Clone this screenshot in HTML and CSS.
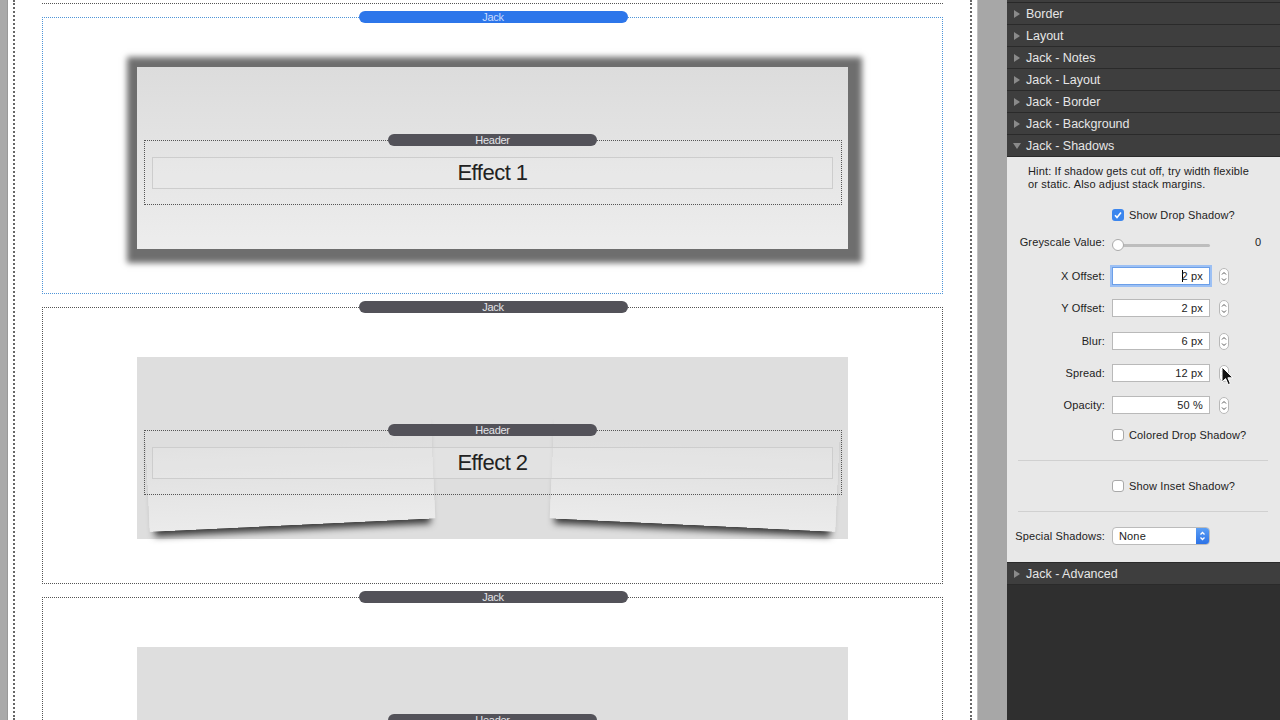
FILE: index.html
```html
<!DOCTYPE html>
<html>
  <head>
    <meta charset="UTF-8">
    <title>Jack - Shadows</title>
    <link rel="stylesheet" href="styles.css">
  </head>
  <body>
    <div class="app">
      <div class="edge"></div>

      <div class="canvas">
        <div class="page">
          <div class="stub"></div>

          <div class="stack selected">
            <span class="pill blue">Jack</span>
            <div class="sheet raised">
              <div class="header-box">
                <span class="pill small">Header</span>
                <div class="title">Effect 1</div>
              </div>
            </div>
          </div>

          <div class="stack">
            <span class="pill">Jack</span>
            <div class="sheet flat">
              <div class="curl left"></div>
              <div class="curl right"></div>
              <div class="header-box">
                <span class="pill small">Header</span>
                <div class="title">Effect 2</div>
              </div>
            </div>
          </div>

          <div class="stack">
            <span class="pill">Jack</span>
            <div class="sheet flat">
              <div class="header-box">
                <span class="pill small">Header</span>
                <div class="title"></div>
              </div>
            </div>
          </div>
        </div>
      </div>

      <div class="gutter"></div>

      <div class="inspector">
        <div class="row-stub"></div>
        <div class="irow"><span class="tri"></span>Border</div>
        <div class="irow"><span class="tri"></span>Layout</div>
        <div class="irow"><span class="tri"></span>Jack - Notes</div>
        <div class="irow"><span class="tri"></span>Jack - Layout</div>
        <div class="irow"><span class="tri"></span>Jack - Border</div>
        <div class="irow"><span class="tri"></span>Jack - Background</div>
        <div class="irow"><span class="tri open"></span>Jack - Shadows</div>

        <div class="props">
          <p class="hint">Hint: If shadow gets cut off, try width flexible<br>or static. Also adjust stack margins.</p>

          <div class="frow r-drop">
            <span class="lbl"></span>
            <span class="check on">
              <svg width="12" height="12" viewBox="0 0 12 12"><path d="M3 6.2l2 2.2 4-5" fill="none" stroke="#fff" stroke-width="1.6"/></svg>
            </span>
            <span class="ctext">Show Drop Shadow?</span>
          </div>

          <div class="frow r-grey">
            <span class="lbl">Greyscale Value:</span>
            <span class="slider"><span class="knob"></span></span>
            <span class="sval">0</span>
          </div>

          <div class="frow r-x">
            <span class="lbl">X Offset:</span>
            <span class="field focus"><span class="caret"></span>2 px</span>
            <span class="stepper"><svg width="10" height="17" viewBox="0 0 10 17"><rect x=".5" y=".5" width="9" height="16" rx="4.5" fill="#fff" stroke="#b8b8b8"/><path d="M3 6.5l2-2 2 2M3 10.5l2 2 2-2" fill="none" stroke="#555"/></svg></span>
          </div>

          <div class="frow r-y">
            <span class="lbl">Y Offset:</span>
            <span class="field">2 px</span>
            <span class="stepper"><svg width="10" height="17" viewBox="0 0 10 17"><rect x=".5" y=".5" width="9" height="16" rx="4.5" fill="#fff" stroke="#b8b8b8"/><path d="M3 6.5l2-2 2 2M3 10.5l2 2 2-2" fill="none" stroke="#555"/></svg></span>
          </div>

          <div class="frow r-blur">
            <span class="lbl">Blur:</span>
            <span class="field">6 px</span>
            <span class="stepper"><svg width="10" height="17" viewBox="0 0 10 17"><rect x=".5" y=".5" width="9" height="16" rx="4.5" fill="#fff" stroke="#b8b8b8"/><path d="M3 6.5l2-2 2 2M3 10.5l2 2 2-2" fill="none" stroke="#555"/></svg></span>
          </div>

          <div class="frow r-spread">
            <span class="lbl">Spread:</span>
            <span class="field">12 px</span>
            <span class="stepper"><svg width="10" height="17" viewBox="0 0 10 17"><rect x=".5" y=".5" width="9" height="16" rx="4.5" fill="#fff" stroke="#b8b8b8"/><path d="M3 6.5l2-2 2 2M3 10.5l2 2 2-2" fill="none" stroke="#555"/></svg></span>
          </div>

          <div class="frow r-opacity">
            <span class="lbl">Opacity:</span>
            <span class="field">50 %</span>
            <span class="stepper"><svg width="10" height="17" viewBox="0 0 10 17"><rect x=".5" y=".5" width="9" height="16" rx="4.5" fill="#fff" stroke="#b8b8b8"/><path d="M3 6.5l2-2 2 2M3 10.5l2 2 2-2" fill="none" stroke="#555"/></svg></span>
          </div>

          <div class="frow r-colored">
            <span class="lbl"></span>
            <span class="check"></span>
            <span class="ctext">Colored Drop Shadow?</span>
          </div>

          <div class="sep"></div>

          <div class="frow r-inset">
            <span class="lbl"></span>
            <span class="check"></span>
            <span class="ctext">Show Inset Shadow?</span>
          </div>

          <div class="sep"></div>

          <div class="frow r-special">
            <span class="lbl">Special Shadows:</span>
            <span class="select">
              <span class="sel-text">None</span>
              <span class="sel-arrow"><svg width="13" height="16" viewBox="0 0 13 16"><path d="M4.5 6.5l2-2 2 2M4.5 9.5l2 2 2-2" fill="none" stroke="#fff" stroke-width="1.3"/></svg></span>
            </span>
          </div>
        </div>

        <div class="irow"><span class="tri"></span>Jack - Advanced</div>
      </div>
    </div>

    <svg class="cursor" width="14" height="20" viewBox="0 0 14 20">
      <path d="M1 1v15l3.6-3.4 2.6 6 2.2-1-2.5-5.8h5z" fill="#111" stroke="#fff" stroke-width="1"/>
    </svg>
  </body>
</html>
```

FILE: styles.css
```css
body {
  margin: 0;
  font-family: "Liberation Sans", Arial, sans-serif;
  overflow: hidden;
}

.app {
  display: flex;
  width: 1280px;
  height: 720px;
  overflow: hidden;
}

.edge {
  width: 7px;
  background: #a9a9a9;
  border-right: 1px solid #999;
}

/* page canvas */

.canvas {
  width: 969px;
  background: #fff;
  overflow: hidden;
}

.page {
  width: 955px;
  height: 720px;
  margin-left: 5px;
  border-left: 2px dotted #666;
  border-right: 2px dotted #666;
}

.stub {
  width: 901px;
  height: 3px;
  margin-left: 27px;
  border-bottom: 1px dotted #555;
}

.stack {
  position: relative;
  box-sizing: border-box;
  width: 901px;
  height: 277px;
  margin: 13px 0 0 27px;
  padding-top: 49px;
  border: 1px dotted #555;
}

.stack.selected {
  border-color: #4f95d8;
}

.pill {
  position: absolute;
  top: -7px;
  left: 50%;
  width: 269px;
  height: 12px;
  margin-left: -134px;
  border-radius: 6px;
  background: #535259;
  color: #e4e4e8;
  font-size: 11px;
  line-height: 12px;
  text-align: center;
  letter-spacing: -0.3px;
}

.pill.blue {
  background: #2d76ea;
  color: #c9dcff;
}

.pill.small {
  width: 209px;
  margin-left: -105px;
}

.sheet {
  position: relative;
  box-sizing: border-box;
  width: 711px;
  height: 182px;
  margin: 0 auto;
  padding-top: 73px;
}

.sheet.raised {
  background: linear-gradient(#dcdcdc, #ededed);
  box-shadow: 2px 2px 6px 12px rgba(0, 0, 0, 0.57);
}

.sheet.flat {
  background: #dedede;
}

.curl {
  position: absolute;
  top: 60px;
  width: 286px;
  height: 108px;
  background: linear-gradient(rgba(222, 222, 222, 0) 25%, #ebebeb);
  box-shadow: 0 10px 7px -5px rgba(0, 0, 0, 0.75);
}

.curl.left {
  left: 10px;
  transform: rotate(-2.7deg);
}

.curl.right {
  left: 415px;
  transform: rotate(2.7deg);
}

.header-box {
  position: relative;
  height: 65px;
  box-sizing: border-box;
  margin: 0 6px 0 7px;
  padding: 16px 8px 0 7px;
  border: 1px dotted #555;
}

.title {
  position: relative;
  height: 32px;
  box-sizing: border-box;
  border: 1px solid #cdcdcd;
  background: rgba(235, 235, 235, 0.35);
  color: #222;
  font-size: 22px;
  line-height: 30px;
  text-align: center;
  letter-spacing: -0.5px;
}

.gutter {
  width: 29px;
  background: #a7a7a7;
  border-left: 1px solid #c2c2c2;
}

/* inspector */

.inspector {
  width: 273px;
  background: #2f2f2f;
  font-size: 11px;
}

.row-stub {
  height: 2px;
  background: #3e3e3e;
  border-bottom: 1px solid #282828;
}

.irow {
  display: flex;
  align-items: center;
  height: 21px;
  padding-left: 7px;
  background: #3e3e3e;
  border-bottom: 1px solid #2a2a2a;
  color: #e6e6e6;
  font-size: 12.5px;
}

.tri {
  width: 0;
  height: 0;
  margin-right: 6px;
  border-left: 6px solid #8a8a8a;
  border-top: 4px solid transparent;
  border-bottom: 4px solid transparent;
}

.tri.open {
  margin-left: -1px;
  margin-right: 5px;
  border-left: 4px solid transparent;
  border-right: 4px solid transparent;
  border-top: 6px solid #8a8a8a;
  border-bottom: 0;
}

.props {
  height: 406px;
  box-sizing: border-box;
  background: #e8e8e8;
  border-bottom: 1px solid #2a2a2a;
  padding-top: 8px;
  color: #222;
  letter-spacing: 0.15px;
}

.hint {
  margin: 0;
  padding-left: 21px;
  line-height: 13px;
}

.frow {
  display: flex;
  align-items: center;
  height: 22px;
}

.lbl {
  width: 98px;
  margin-right: 7px;
  text-align: right;
  white-space: nowrap;
}

.r-drop { margin-top: 13px; }
.r-grey { margin-top: 5px; }
.r-x { margin-top: 12px; }
.r-y { margin-top: 10px; }
.r-blur { margin-top: 11px; }
.r-spread { margin-top: 10px; }
.r-opacity { margin-top: 10px; }
.r-colored { margin-top: 8px; }
.r-inset { margin-top: 14px; }
.r-special { margin-top: 13px; }

.sep {
  height: 1px;
  margin: 14px 12px 0 11px;
  background: #d0d0d0;
}

.check {
  box-sizing: border-box;
  width: 12px;
  height: 12px;
  border: 1px solid #a9a9a9;
  border-radius: 3px;
  background: #fff;
}

.check.on {
  border: 0;
  background: #3b86ee;
}

.check svg {
  display: block;
}

.ctext {
  margin-left: 5px;
}

.slider {
  position: relative;
  width: 92px;
  height: 3px;
  margin-top: 6px;
  margin-left: 6px;
  border-radius: 2px;
  background: #bdbdbd;
}

.knob {
  position: absolute;
  top: -5px;
  left: -6px;
  box-sizing: border-box;
  width: 12px;
  height: 12px;
  border: 1px solid #aaa;
  border-radius: 50%;
  background: #fff;
}

.sval {
  margin-left: 45px;
}

.field {
  box-sizing: border-box;
  width: 98px;
  height: 18px;
  padding-right: 6px;
  border: 1px solid #b9b9b9;
  background: #fff;
  text-align: right;
  line-height: 16px;
}

.field.focus {
  border-color: #6c9fe8;
  box-shadow: 0 0 0 2px #9cc0f4;
}

.caret {
  display: inline-block;
  width: 1px;
  height: 12px;
  margin-right: -1px;
  vertical-align: -2px;
  background: #000;
}

.stepper {
  margin-left: 9px;
  height: 17px;
}

.stepper svg {
  display: block;
}

.select {
  display: flex;
  box-sizing: border-box;
  width: 98px;
  height: 18px;
  border: 1px solid #bbb;
  border-radius: 4px;
  background: #fff;
  overflow: hidden;
}

.sel-text {
  flex: 1;
  padding-left: 6px;
  line-height: 16px;
}

.sel-arrow {
  width: 13px;
  background: linear-gradient(#5a9ef5, #2c72e6);
}

.sel-arrow svg {
  display: block;
}

.cursor {
  position: absolute;
  left: 1221px;
  top: 366px;
}
```
